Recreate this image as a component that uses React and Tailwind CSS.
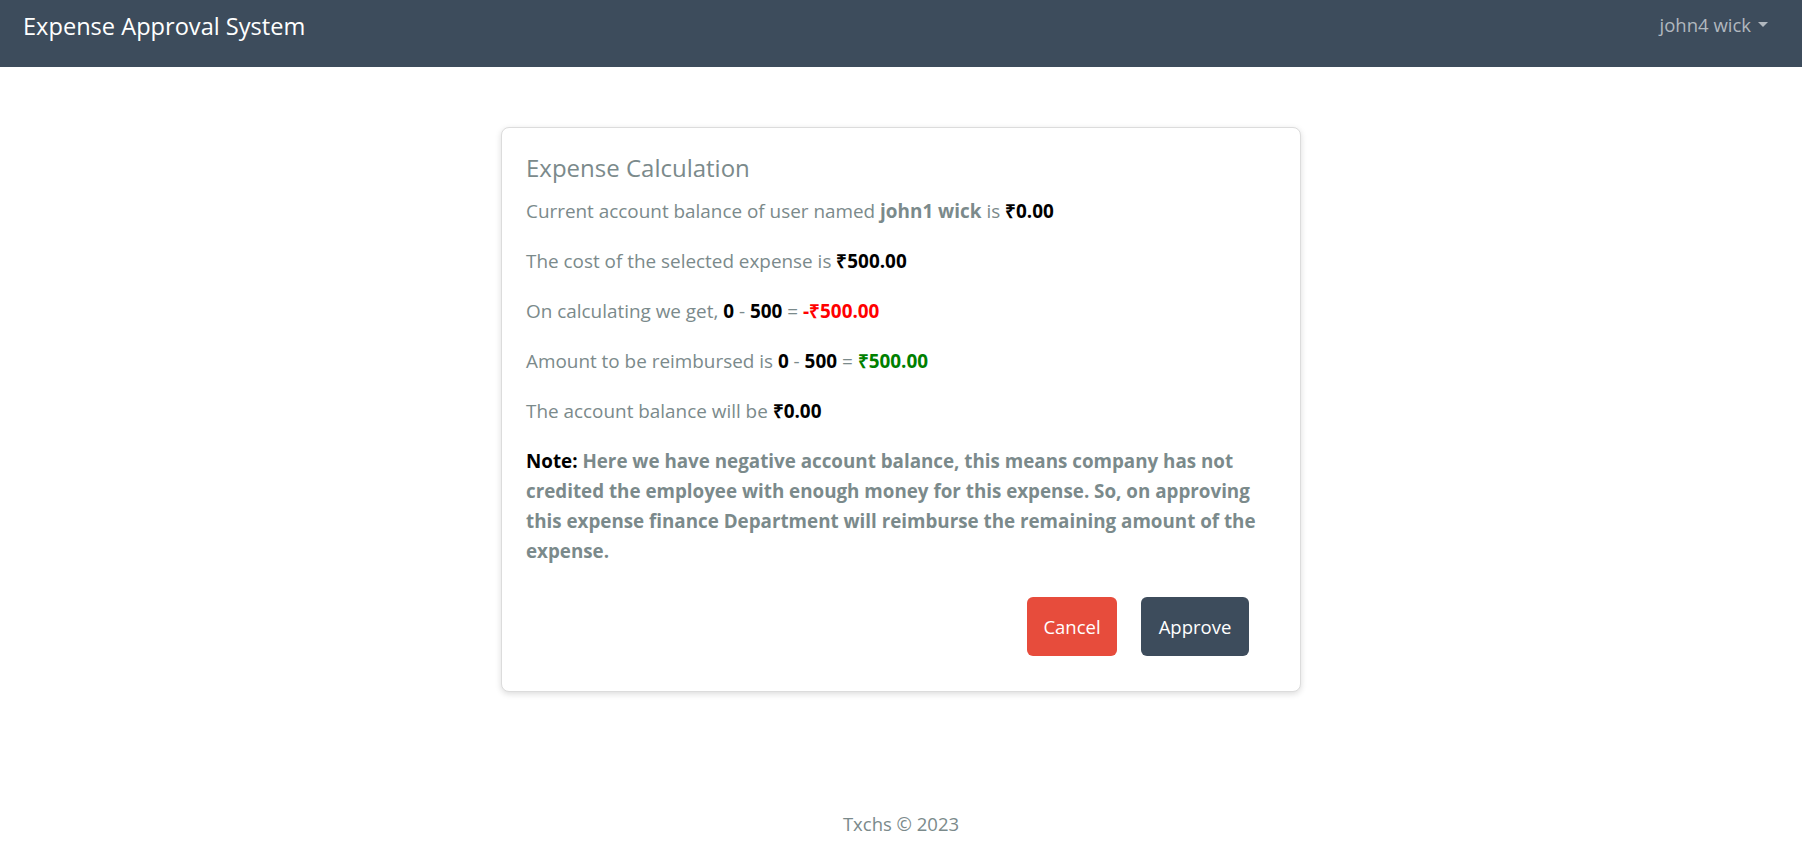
import React from "react";

const gray = "text-[#7b8a8b]";

function Navbar() {
  return (
    <nav className="h-[67px] bg-[#3d4c5c] flex items-start justify-between pl-[23px] pr-[34px]">
      <a className="pt-[10px] text-[23.6px] leading-8 text-white">Expense Approval System</a>
      <button className="pt-[11px] flex items-center gap-[7px] text-[18.5px] leading-[27px] text-[#b1b8bf]">
        john4 wick
        <span className="w-0 h-0 border-x-[5.5px] border-x-transparent border-t-[5px] border-t-[#b1b8bf]" />
      </button>
    </nav>
  );
}

function B({ children, className = "text-black" }) {
  return <b className={`font-bold ${className}`}>{children}</b>;
}

export default function App() {
  return (
    <div className="min-h-screen flex flex-col bg-white font-['Open_Sans',sans-serif]">
      <Navbar />

      <main className="mt-[60px] flex justify-center">
        <div className="w-[800px] rounded-lg border border-[#dcdcdc] bg-white pt-6 px-6 pb-[35px] shadow-[0_2px_6px_rgba(0,0,0,0.14)]">
          <h2 className={`mb-3 text-[24px] leading-8 font-medium ${gray}`}>Expense Calculation</h2>

          <div className={`text-[18.9px] leading-[30px] ${gray} space-y-5`}>
            <p>
              Current account balance of user named <B className={gray}>john1 wick</B> is <B>₹0.00</B>
            </p>
            <p>
              The cost of the selected expense is <B>₹500.00</B>
            </p>
            <p>
              On calculating we get, <B>0</B> - <B>500</B> = <B className="text-[#ff0000]">-₹500.00</B>
            </p>
            <p>
              Amount to be reimbursed is <B>0</B> - <B>500</B> = <B className="text-[#008000]">₹500.00</B>
            </p>
            <p>
              The account balance will be <B>₹0.00</B>
            </p>
            <p className="whitespace-nowrap font-bold text-[18.8px]">
              <span className="text-black">Note:</span> Here we have negative account balance, this means company has not
              <br />
              credited the employee with enough money for this expense. So, on approving
              <br />
              this expense finance Department will reimburse the remaining amount of the
              <br />
              expense.
            </p>
          </div>

          <div className="mt-[31px] flex justify-end gap-6 pr-[27px]">
            <button className="h-[59px] w-[90px] rounded-md bg-[#e74c3c] text-[18.5px] text-white">Cancel</button>
            <button className="h-[59px] w-[108px] rounded-md bg-[#3d4c5c] text-[18.5px] text-white">Approve</button>
          </div>
        </div>
      </main>

      <footer className={`mt-auto pb-2 text-center text-[18.5px] leading-[27px] ${gray}`}>Txchs © 2023</footer>
    </div>
  );
}
